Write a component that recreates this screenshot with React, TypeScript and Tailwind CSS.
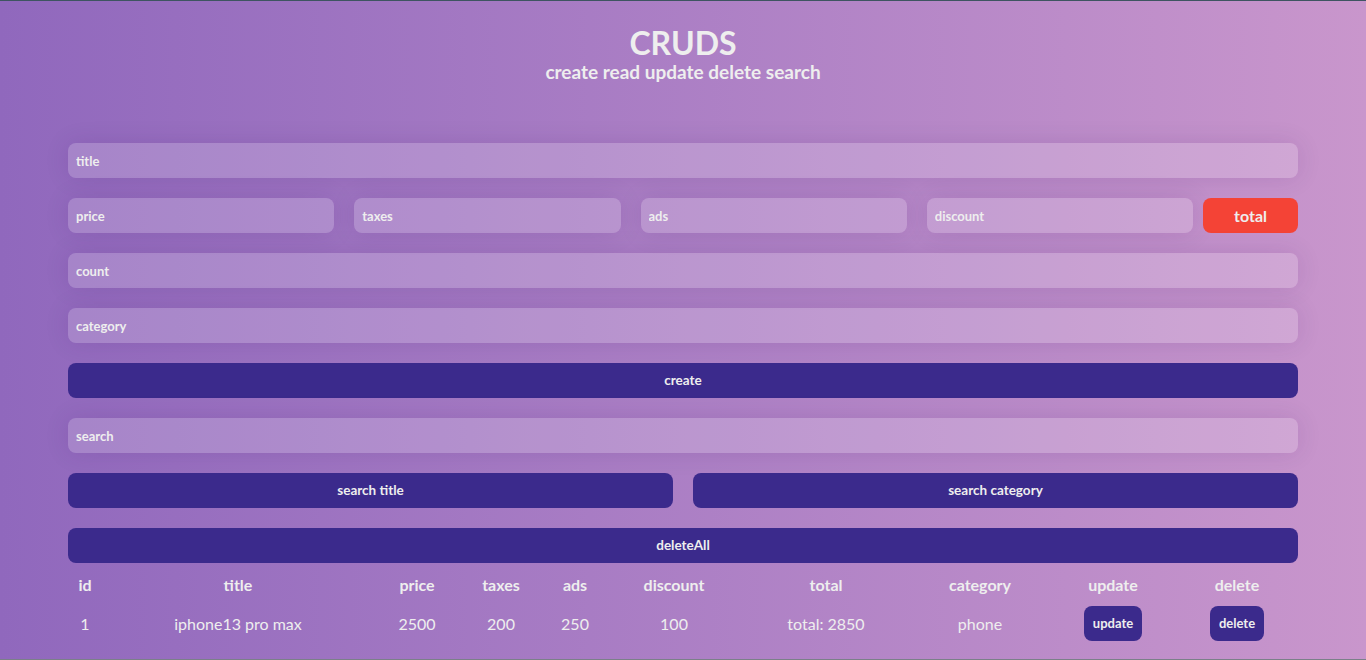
const inputCls =
  'h-[35px] w-full rounded-lg bg-white/[0.18] px-2 text-[13px] font-bold text-[#eee] placeholder:text-[#eee] outline-none shadow-[0_0_24px_rgba(60,20,100,0.12)]';
const btnCls =
  'h-[35px] w-full rounded-lg bg-[#3b2a8c] text-[13.5px] font-bold text-[#eee] cursor-pointer';

const columns = ['id', 'title', 'price', 'taxes', 'ads', 'discount', 'total', 'category', 'update', 'delete'];

const products = [
  { id: 1, title: 'iphone13 pro max', price: 2500, taxes: 200, ads: 250, discount: 100, total: 2850, category: 'phone' },
];

const gridCols = 'grid grid-cols-[34px_272px_86px_82px_66px_132px_172px_136px_130px_118px]';

export default function App() {
  return (
    <div
      className="flex h-[660px] w-full flex-col overflow-hidden bg-gradient-to-r from-[#9068bd] to-[#c996cc] text-[#eee]"
      style={{ fontFamily: 'Lato, "Open Sans", sans-serif' }}
    >
      <div className="h-px w-full shrink-0 bg-[#3e5461]" />

      <div className="flex flex-1 flex-col px-[68px]">
        {/* header */}
        <div className="flex flex-col items-center pt-[24px]">
          <h1 className="text-[32px] font-bold leading-[36px]">CRUDS</h1>
          <p className="text-[19px] font-bold leading-[22px]">create read update delete search</p>
        </div>

        {/* inputs */}
        <div className="mt-[60px] flex flex-col gap-5">
          <input className={inputCls} placeholder="title" />

          <div className="flex items-center">
            <div className="flex flex-1 gap-5">
              <input className={inputCls} placeholder="price" />
              <input className={inputCls} placeholder="taxes" />
              <input className={inputCls} placeholder="ads" />
              <input className={inputCls} placeholder="discount" />
            </div>
            <small className="ml-[10px] flex h-[35px] w-[95px] items-center justify-center rounded-lg bg-[#f44336] text-[16px] font-bold">
              total
            </small>
          </div>

          <input className={inputCls} placeholder="count" />
          <input className={inputCls} placeholder="category" />
          <button className={btnCls}>create</button>

          <input className={inputCls} placeholder="search" />
          <div className="flex gap-5">
            <button className={btnCls}>search title</button>
            <button className={btnCls}>search category</button>
          </div>
          <button className={btnCls}>deleteAll</button>
        </div>

        {/* table */}
        <div className="mt-[10px] text-[16px]">
          <div className={`${gridCols} h-[22px] items-center text-center font-bold`}>
            {columns.map((c) => (
              <div key={c}>{c}</div>
            ))}
          </div>
          {products.map((p) => (
            <div key={p.id} className={`${gridCols} mt-[11px] items-center text-center`}>
              <div>{p.id}</div>
              <div>{p.title}</div>
              <div>{p.price}</div>
              <div>{p.taxes}</div>
              <div>{p.ads}</div>
              <div>{p.discount}</div>
              <div>total: {p.total}</div>
              <div>{p.category}</div>
              <div className="flex justify-center">
                <button className="h-[35px] rounded-lg bg-[#3b2a8c] px-[9px] text-[13px] font-bold">update</button>
              </div>
              <div className="flex justify-center">
                <button className="h-[35px] rounded-lg bg-[#3b2a8c] px-[9px] text-[13px] font-bold">delete</button>
              </div>
            </div>
          ))}
        </div>
      </div>

      <div className="h-px w-full shrink-0 bg-[#7b8089]" />
    </div>
  );
}
